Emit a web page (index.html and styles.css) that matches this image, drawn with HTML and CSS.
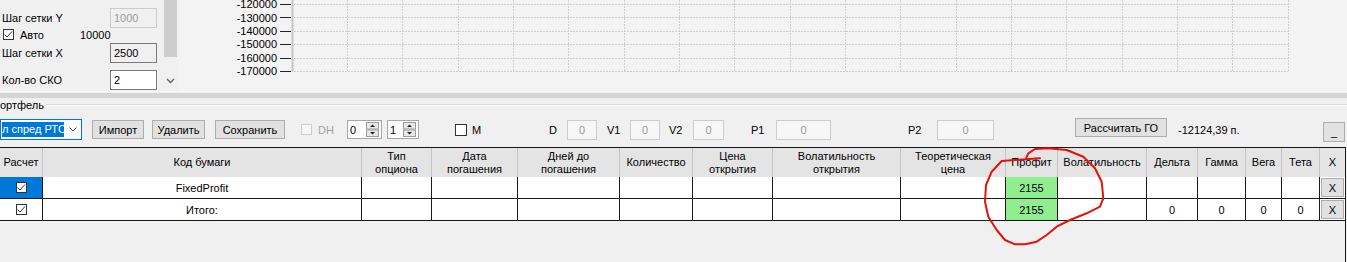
FILE: index.html
```html
<!DOCTYPE html>
<html lang="ru">
<head>
<meta charset="utf-8">
<title>Портфель</title>
<link rel="stylesheet" href="styles.css">
</head>
<body>
<div class="app">
  <section class="top">
    <div class="params">
      <div class="prow r1"><span class="lbl">Шаг сетки Y</span><span class="tb dis">1000</span></div>
      <div class="prow r2"><span class="chk"><svg width="11" height="11" viewBox="0 0 11 11"><path d="M1.5 5.5 L4 8 L9 2.5" fill="none" stroke="#333" stroke-width="1"/></svg></span><span class="lbl auto">Авто</span><span class="lbl">10000</span></div>
      <div class="prow r3"><span class="lbl">Шаг сетки X</span><span class="tb ro">2500</span></div>
      <div class="prow r4"><span class="lbl">Кол-во СКО</span><span class="tb">2</span></div>
    </div>
    <div class="vscroll">
      <div class="thumb"></div>
      <div class="down"><svg width="9" height="6" viewBox="0 0 9 6"><path d="M1 1 L4.5 4.5 L8 1" fill="none" stroke="#606060" stroke-width="1.4"/></svg></div>
    </div>
    <div class="chart">
      <svg width="1169" height="91" viewBox="0 0 1169 91">
        <g class="grid-lines" stroke="#cfcfcf" stroke-width="1" stroke-dasharray="2 1" fill="none">
          <path d="M116 4.5 H1110.5 M116 17.5 H1110.5 M116 31.5 H1110.5 M116 44.5 H1110.5 M116 58.5 H1110.5 M116 71.5 H1110.5"/>
          <path d="M169.5 0 V71.5 M224.5 0 V71.5 M280.5 0 V71.5 M335.5 0 V71.5 M390.5 0 V71.5 M446.5 0 V71.5 M501.5 0 V71.5 M556.5 0 V71.5 M612.5 0 V71.5 M667.5 0 V71.5 M722.5 0 V71.5 M778.5 0 V71.5 M833.5 0 V71.5 M888.5 0 V71.5 M944.5 0 V71.5 M999.5 0 V71.5 M1054.5 0 V71.5 M1110.5 0 V71.5"/>
        </g>
        <path d="M114.5 0 V72" stroke="#c6c6c6" stroke-width="2"/>
        <path d="M102 4.5 H113 M102 17.5 H113 M102 31.5 H113 M102 44.5 H113 M102 58.5 H113 M102 71.5 H113" stroke="#222" stroke-width="1"/>
        <g class="axis-text" text-anchor="end">
          <text x="99" y="8">-120000</text>
          <text x="99" y="21.5">-130000</text>
          <text x="99" y="35">-140000</text>
          <text x="99" y="48">-150000</text>
          <text x="99" y="61.5">-160000</text>
          <text x="99" y="75">-170000</text>
        </g>
      </svg>
    </div>
  </section>
  <div class="splitter"></div>
  <section class="portfolio">
    <div class="group-title"><span class="cap">Портфель</span><i class="group-line"></i></div>
    <div class="toolbar">
      <div class="combo"><span class="combo-text">л спред РТС</span><svg class="combo-arrow" width="8" height="5" viewBox="0 0 8 5"><path d="M0.5 0.5 L4 4 L7.5 0.5" fill="none" stroke="#555" stroke-width="1"/></svg></div>
      <span class="btn b-import">Импорт</span>
      <span class="btn b-del">Удалить</span>
      <span class="btn b-save">Сохранить</span>
      <span class="chk dis c-dh"></span>
      <span class="lbl l-dh">DH</span>
      <div class="spin s0"><span class="sv">0</span><svg class="sa" width="13" height="15" viewBox="0 0 13 15"><rect x="0.5" y="0.5" width="12" height="6.5" fill="#e8e8e8" stroke="#9c9c9c"/><rect x="0.5" y="8" width="12" height="6.5" fill="#e8e8e8" stroke="#9c9c9c"/><path d="M4 5 L6.5 2.5 L9 5 Z M4 10 L6.5 12.5 L9 10 Z" fill="#222"/></svg></div>
      <div class="spin s1"><span class="sv">1</span><svg class="sa" width="13" height="15" viewBox="0 0 13 15"><rect x="0.5" y="0.5" width="12" height="6.5" fill="#e8e8e8" stroke="#9c9c9c"/><rect x="0.5" y="8" width="12" height="6.5" fill="#e8e8e8" stroke="#9c9c9c"/><path d="M4 5 L6.5 2.5 L9 5 Z M4 10 L6.5 12.5 L9 10 Z" fill="#222"/></svg></div>
      <span class="chk c-m"></span>
      <span class="lbl l-m">M</span>
      <span class="lbl l-d">D</span><span class="box x-d">0</span>
      <span class="lbl l-v1">V1</span><span class="box x-v1">0</span>
      <span class="lbl l-v2">V2</span><span class="box x-v2">0</span>
      <span class="lbl l-p1">P1</span><span class="box x-p1">0</span>
      <span class="lbl l-p2">P2</span><span class="box x-p2">0</span>
      <span class="btn b-go">Рассчитать ГО</span>
      <span class="lbl l-go">-12124,39 п.</span>
      <span class="btn b-min">_</span>
    </div>
    <div class="dgv-wrap">
      <div class="dgv">
        <div class="hc">Расчет</div>
        <div class="hc">Код бумаги</div>
        <div class="hc">Тип<br>опциона</div>
        <div class="hc">Дата<br>погашения</div>
        <div class="hc">Дней до<br>погашения</div>
        <div class="hc">Количество</div>
        <div class="hc">Цена<br>открытия</div>
        <div class="hc">Волатильность<br>открытия</div>
        <div class="hc">Теоретическая<br>цена</div>
        <div class="hc">Профит</div>
        <div class="hc">Волатильность</div>
        <div class="hc">Дельта</div>
        <div class="hc">Гамма</div>
        <div class="hc">Вега</div>
        <div class="hc">Тета</div>
        <div class="hc last">X</div>

        <div class="dc calc selected"><span class="cb"><svg width="11" height="11" viewBox="0 0 11 11"><path d="M1.5 5.5 L4 8 L9 2.5" fill="none" stroke="#333" stroke-width="1"/></svg></span></div>
        <div class="dc">FixedProfit</div>
        <div class="dc"></div>
        <div class="dc"></div>
        <div class="dc"></div>
        <div class="dc"></div>
        <div class="dc"></div>
        <div class="dc"></div>
        <div class="dc"></div>
        <div class="dc profit">2155</div>
        <div class="dc"></div>
        <div class="dc"></div>
        <div class="dc"></div>
        <div class="dc"></div>
        <div class="dc"></div>
        <div class="dc last del"><span class="xbtn">X</span></div>

        <div class="dc calc"><span class="cb"><svg width="11" height="11" viewBox="0 0 11 11"><path d="M1.5 5.5 L4 8 L9 2.5" fill="none" stroke="#333" stroke-width="1"/></svg></span></div>
        <div class="dc">Итого:</div>
        <div class="dc"></div>
        <div class="dc"></div>
        <div class="dc"></div>
        <div class="dc"></div>
        <div class="dc"></div>
        <div class="dc"></div>
        <div class="dc"></div>
        <div class="dc profit">2155</div>
        <div class="dc"></div>
        <div class="dc">0</div>
        <div class="dc">0</div>
        <div class="dc">0</div>
        <div class="dc">0</div>
        <div class="dc last del"><span class="xbtn">X</span></div>
      </div>
    </div>
  </section>
  <svg class="annotation" width="1347" height="262" viewBox="0 0 1347 262">
    <path d="M1040 158.3 L1001.7 161 L991.7 171.7 L986 185 L985 201.7 L988.3 216.7 L996.7 230 L1005 240 L1015 244.3 L1025 244.3 L1036.7 241.7 L1046.7 235 L1056.7 226.7 L1070 220 L1086.7 213.3 L1100 206.7 L1103.3 198.3 L1101.7 181.7 L1095 168.3 L1083.3 156.7 L1066.7 150 L1048.3 148.3 L1035 149 L1028.3 153.3 L1026 158.3" fill="none" stroke="#e3120b" stroke-width="2" stroke-linejoin="round" stroke-linecap="round"/>
  </svg>
</div>
</body>
</html>
```

FILE: styles.css
```css
* { box-sizing: border-box; }
html, body { margin: 0; padding: 0; }
body {
  width: 1347px;
  height: 262px;
  overflow: hidden;
  background: #f0f0f0;
  font-family: "Liberation Sans", Arial, sans-serif;
  font-size: 11px;
  color: #000;
}
.app { position: relative; width: 1347px; height: 262px; overflow: hidden; }

/* ---------- top area ---------- */
.top { display: flex; height: 91px; }
.params {
  width: 163px;
  padding: 8px 6px 0 2px;
  display: flex;
  flex-direction: column;
}
.prow { display: flex; align-items: center; }
.r1 { height: 20px; }
.r2 { height: 13px; }
.r3 { height: 20px; margin-top: 2px; }
.r4 { height: 20px; margin-top: 7px; }
.lbl { white-space: nowrap; }
.auto { width: 60px; margin-left: 6px; }
.r2 .chk { margin-left: 1px; }
.tb {
  margin-left: auto;
  width: 47px;
  height: 20px;
  border: 1px solid #7a7a7a;
  background: #fff;
  padding: 0 3px;
  display: flex;
  align-items: center;
}
.tb.dis { border-color: #cccccc; background: #f0f0f0; color: #9b9b9b; }
.tb.ro { background: #f0f0f0; }
.chk {
  width: 11px;
  height: 11px;
  border: 1px solid #333;
  background: #fff;
  display: inline-flex;
  flex: none;
}
.chk svg { margin: -1px; }
.chk.dis { border-color: #cdcdcd; background: #f7f7f7; }

.vscroll {
  width: 15px;
  display: flex;
  flex-direction: column;
  background: #f0f0f0;
}
.thumb { margin: 0 1px; height: 57px; background: #cdcdcd; }
.down { margin-top: auto; height: 16px; display: flex; align-items: center; justify-content: center; padding-bottom: 4px; }

.chart { flex: 1; background: #f3f3f3; }
.chart svg { display: block; }
.axis-text { font-family: "Liberation Sans", Arial, sans-serif; font-size: 11px; fill: #000; }

.splitter {
  height: 7px;
  border-top: 1px solid #fbfbfb;
  border-bottom: 5px solid #d5d5d5;
}

/* ---------- portfolio ---------- */
.portfolio { height: 164px; display: flex; flex-direction: column; }
.group-title { height: 15px; display: flex; align-items: center; }
.cap { margin-left: -8px; line-height: 15px; }
.group-line {
  flex: 1;
  margin-left: 2px;
  margin-top: -1px;
  height: 2px;
  border-top: 1px solid #dadada;
  border-bottom: 1px solid #fdfdfd;
}

.toolbar { display: flex; align-items: center; height: 21px; margin-top: 6px; }
.combo {
  width: 82px;
  height: 21px;
  border: 1px solid #0078d7;
  background: #fff;
  display: flex;
  align-items: center;
  padding: 0 0 0 1px;
}
.combo-text {
  background: #0078d7;
  color: #fff;
  height: 15px;
  width: 62px;
  line-height: 15px;
  white-space: nowrap;
  overflow: hidden;
}
.combo-arrow { margin-left: auto; margin-right: 4px; }

.btn {
  height: 19px;
  border: 1px solid #adadad;
  background: #e1e1e1;
  display: flex;
  align-items: center;
  justify-content: center;
  white-space: nowrap;
  flex: none;
}
.b-import { margin-left: 10px; width: 52px; }
.b-del { margin-left: 8px; width: 53px; }
.b-save { margin-left: 10px; width: 70px; }
.c-dh { margin-left: 16px; }
.l-dh { margin-left: 6px; width: 29px; color: #a3a3a3; }

.spin {
  width: 35px;
  height: 19px;
  border: 1px solid #a8a8a8;
  background: #fff;
  display: flex;
  align-items: center;
  padding: 0 2px 0 2px;
  flex: none;
}
.s1 { width: 32px; margin-left: 5px; }
.sv { flex: 1; }

.c-m { margin-left: 36px; width: 12px; height: 12px; }
.l-m { margin-left: 5px; width: 77px; }
.l-d { width: 18px; }
.l-v1 { margin-left: 10px; width: 23px; }
.l-v2 { margin-left: 9px; width: 24px; }
.l-p1 { margin-left: 27px; width: 25px; }
.l-p2 { margin-left: 77px; width: 29px; }
.box {
  height: 20px;
  border: 1px solid #cccccc;
  background: #f7f7f7;
  color: #9b9b9b;
  display: flex;
  align-items: center;
  justify-content: center;
  flex: none;
}
.x-d { width: 30px; }
.x-v1 { width: 30px; }
.x-v2 { width: 31px; }
.x-p1 { width: 55px; }
.x-p2 { width: 57px; }
.b-go { margin-left: 81px; width: 92px; align-self: flex-start; margin-top: -1px; }
.l-go { margin-left: 11px; }
.b-min {
  margin-left: auto;
  margin-right: 2px;
  width: 22px;
  height: 20px;
  align-self: flex-start;
  margin-top: 3px;
}

/* ---------- data grid ---------- */
.dgv-wrap {
  margin-top: 7px;
  width: 1346px;
  flex: 1;
  border-top: 1px solid #1a1a1a;
  border-right: 1px solid #1a1a1a;
  background: #f0f0f0;
}
.dgv {
  display: grid;
  grid-template-columns: 43px 319px 70px 86px 102px 73px 80px 128px 105px 52px 89px 51px 48px 36px 38px 25px;
  grid-template-rows: 29px 22px 22px;
}
.hc {
  background: #e4e4e4;
  border-right: 1px solid #c4c4c4;
  display: flex;
  align-items: center;
  justify-content: center;
  text-align: center;
  line-height: 13px;
  white-space: nowrap;
}
.dc {
  background: #fff;
  border-right: 1px solid #1a1a1a;
  border-bottom: 1px solid #1a1a1a;
  display: flex;
  align-items: center;
  justify-content: center;
  white-space: nowrap;
}
.hc.last, .dc.last { border-right: none; }
.dc.selected { background: #0078d7; }
.cb {
  width: 11px;
  height: 11px;
  border: 1px solid #333;
  background: #fff;
  display: inline-flex;
}
.cb svg { margin: -1px; }
.dc.profit { background: #90ee90; }
.dc.del { padding: 1px; }
.xbtn {
  width: 100%;
  height: 100%;
  border: 1px solid #adadad;
  background: #e1e1e1;
  display: flex;
  align-items: center;
  justify-content: center;
}

.annotation { position: absolute; left: 0; top: 0; pointer-events: none; }
```
